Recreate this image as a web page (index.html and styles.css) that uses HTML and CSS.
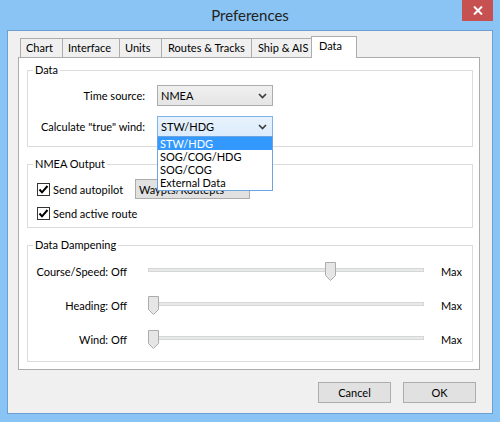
FILE: index.html
```html
<!DOCTYPE html>
<html>
<head>
<meta charset="utf-8">
<link rel="stylesheet" href="styles.css">
</head>
<body>
<div class="window">
  <div class="titlebar">
    <span></span>
    <div class="title">Preferences</div>
    <div class="close">
      <svg width="10" height="9" viewBox="0 0 10 9"><path d="M1 0.5 L9 8.5 M9 0.5 L1 8.5" stroke="#fff" stroke-width="2" fill="none"/></svg>
    </div>
  </div>
  <div class="client">
    <div class="tabs">
      <div class="tab w-chart">Chart</div>
      <div class="tab w-interface">Interface</div>
      <div class="tab w-units">Units</div>
      <div class="tab w-routes">Routes &amp; Tracks</div>
      <div class="tab w-ship">Ship &amp; AIS</div>
      <div class="tab w-data active">Data</div>
    </div>
    <div class="panel">
      <fieldset class="group">
        <legend>Data</legend>
        <div class="form-grid">
          <div class="lbl">Time source:</div>
          <div class="combo">
            <span>NMEA</span>
            <svg width="9" height="6" viewBox="0 0 9 6"><polyline points="1,1 4.5,4.5 8,1" stroke="#3c3c3c" stroke-width="1.6" fill="none"/></svg>
          </div>
          <div class="lbl">Calculate "true" wind:</div>
          <div class="combo-wrap">
            <div class="combo focused">
              <span>STW/HDG</span>
              <svg width="9" height="6" viewBox="0 0 9 6"><polyline points="1,1 4.5,4.5 8,1" stroke="#3c3c3c" stroke-width="1.6" fill="none"/></svg>
            </div>
            <div class="dropdown">
              <div class="item sel">STW/HDG</div>
              <div class="item">SOG/COG/HDG</div>
              <div class="item">SOG/COG</div>
              <div class="item">External Data</div>
            </div>
          </div>
        </div>
      </fieldset>
      <fieldset class="group">
        <legend>NMEA Output</legend>
        <div class="nmea">
          <div class="check-row">
            <svg class="cb" width="13" height="13" viewBox="0 0 13 13"><rect x="0.5" y="0.5" width="12" height="12" fill="#fff" stroke="#333"/><polyline points="2.5,6.5 5,9.3 10.5,3" stroke="#000" stroke-width="2" fill="none"/></svg>
            <span>Send autopilot</span>
          </div>
          <div class="combo old">
            <span>Waypts/Routepts</span>
            <svg width="5" height="3" viewBox="0 0 5 3"><polygon points="0,0 5,0 2.5,3" fill="#222"/></svg>
          </div>
          <div class="check-row">
            <svg class="cb" width="13" height="13" viewBox="0 0 13 13"><rect x="0.5" y="0.5" width="12" height="12" fill="#fff" stroke="#333"/><polyline points="2.5,6.5 5,9.3 10.5,3" stroke="#000" stroke-width="2" fill="none"/></svg>
            <span>Send active route</span>
          </div>
        </div>
      </fieldset>
      <fieldset class="group">
        <legend>Data Dampening</legend>
        <div class="damp">
          <div class="srow">
            <div class="slbl">Course/Speed: Off</div>
            <div class="slider">
              <div class="track"></div>
              <svg class="thumb pos-mid" width="11" height="19" viewBox="0 0 11 19"><path d="M0.5 0.5 H10.5 V13.5 L5.5 18.5 L0.5 13.5 Z" fill="#e6e6e6" stroke="#acacac"/></svg>
            </div>
            <div class="max">Max</div>
          </div>
          <div class="srow">
            <div class="slbl">Heading: Off</div>
            <div class="slider">
              <div class="track"></div>
              <svg class="thumb" width="11" height="19" viewBox="0 0 11 19"><path d="M0.5 0.5 H10.5 V13.5 L5.5 18.5 L0.5 13.5 Z" fill="#e6e6e6" stroke="#acacac"/></svg>
            </div>
            <div class="max">Max</div>
          </div>
          <div class="srow">
            <div class="slbl">Wind: Off</div>
            <div class="slider">
              <div class="track"></div>
              <svg class="thumb" width="11" height="19" viewBox="0 0 11 19"><path d="M0.5 0.5 H10.5 V13.5 L5.5 18.5 L0.5 13.5 Z" fill="#e6e6e6" stroke="#acacac"/></svg>
            </div>
            <div class="max">Max</div>
          </div>
        </div>
      </fieldset>
    </div>
    <div class="buttons">
      <div class="btn">Cancel</div>
      <div class="btn">OK</div>
    </div>
  </div>
</div>
</body>
</html>
```
FILE: styles.css
```css
body {
  margin: 0;
}

.window {
  width: 500px;
  height: 422px;
  background: #8ac4f5;
  display: flex;
  flex-direction: column;
  font-family: Lato, "Open Sans", sans-serif;
  font-size: 11px;
  color: #000;
}

.titlebar {
  height: 30px;
  flex: none;
  display: grid;
  grid-template-columns: 1fr auto 1fr;
  align-items: center;
}

.title {
  font-size: 15px;
  color: #222;
}

.close {
  justify-self: end;
  align-self: start;
  width: 31px;
  height: 21px;
  margin-right: 7px;
  background: #c75050;
  display: flex;
  align-items: center;
  justify-content: center;
}

.client {
  flex: 1;
  margin: 0 7px 8px;
  border: 1px solid #6b9fd4;
  background: #f0f0f0;
  padding: 5px 12px 0 10px;
}

.tabs {
  display: flex;
  align-items: flex-end;
  height: 21px;
  margin-left: 2px;
}

.tab {
  height: 19px;
  box-sizing: border-box;
  border: 1px solid #acacac;
  border-bottom: none;
  background: #f0f0f0;
  padding-left: 5px;
  line-height: 17px;
  margin-left: -1px;
  white-space: nowrap;
  overflow: hidden;
}

.tab:first-child {
  margin-left: 0;
}

.w-chart { width: 43px; }
.w-interface { width: 58px; }
.w-units { width: 43px; }
.w-routes { width: 91px; padding-left: 6px; }
.w-ship { width: 61px; padding-left: 6px; }
.w-data { width: 46px; }

.tab.active {
  height: 22px;
  background: #fff;
  margin-bottom: -1px;
  position: relative;
  z-index: 1;
  line-height: 18px;
  padding-left: 7px;
}

.panel {
  height: 313px;
  box-sizing: border-box;
  border: 1px solid #acacac;
  background: #fff;
  display: flex;
  flex-direction: column;
}

.group {
  margin: 9px 6px 0 8px;
  padding: 0;
  border: 1px solid #dcdcdc;
  min-width: 0;
}

.group:first-child {
  margin-top: 4px;
}

legend {
  margin-left: 5px;
  padding: 0 2px;
  line-height: 16px;
}

.form-grid {
  display: grid;
  grid-template-columns: 117px 116px;
  column-gap: 12px;
  row-gap: 10px;
  padding: 7px 0 9px 0;
}

.lbl {
  text-align: right;
  align-self: center;
  white-space: nowrap;
}

.combo {
  height: 21px;
  box-sizing: border-box;
  border: 1px solid #acacac;
  background: linear-gradient(#f0f0f0, #e5e5e5);
  display: flex;
  align-items: center;
  justify-content: space-between;
  padding: 0 5px 0 3px;
  white-space: nowrap;
}

.combo.focused {
  border-color: #7eb4ea;
  background: linear-gradient(#e8f2fc, #dcecfc);
}

.combo-wrap {
  position: relative;
}

.dropdown {
  position: absolute;
  left: 0;
  top: 20px;
  width: 116px;
  box-sizing: border-box;
  border: 1px solid #6aa5e0;
  background: #fff;
  z-index: 10;
  padding-bottom: 1px;
}

.item {
  height: 13px;
  line-height: 13px;
  padding-left: 2px;
  white-space: nowrap;
}

.item.sel {
  background: #3399ff;
  color: #fff;
}

.nmea {
  display: grid;
  grid-template-columns: 98px 115px;
  grid-auto-rows: 20px;
  row-gap: 4px;
  padding: 7px 0 4px 9px;
}

.check-row {
  display: flex;
  align-items: center;
  white-space: nowrap;
}

.cb {
  flex: none;
  margin-right: 3px;
}

.combo.old {
  height: 20px;
  background: #e1e1e1;
  padding: 0 7px 0 3px;
}

.damp {
  display: flex;
  flex-direction: column;
  gap: 15px;
  padding: 9px 0 12px 0;
}

.srow {
  display: flex;
  align-items: center;
  height: 19px;
}

.slbl {
  width: 99px;
  text-align: right;
  white-space: nowrap;
}

.slider {
  position: relative;
  width: 276px;
  height: 19px;
  margin-left: 21px;
}

.track {
  margin-top: 6px;
  height: 4px;
  box-sizing: border-box;
  border: 1px solid #d6d6d6;
  background: #e7eaea;
}

.thumb {
  position: absolute;
  top: 0;
  left: 0;
}

.thumb.pos-mid {
  left: 177px;
}

.max {
  margin-left: 17px;
}

.buttons {
  display: flex;
  justify-content: flex-end;
  gap: 12px;
  margin-top: 12px;
  margin-right: 4px;
}

.btn {
  width: 73px;
  height: 21px;
  box-sizing: border-box;
  border: 1px solid #adadad;
  background: #e1e1e1;
  display: flex;
  align-items: center;
  justify-content: center;
}
```
